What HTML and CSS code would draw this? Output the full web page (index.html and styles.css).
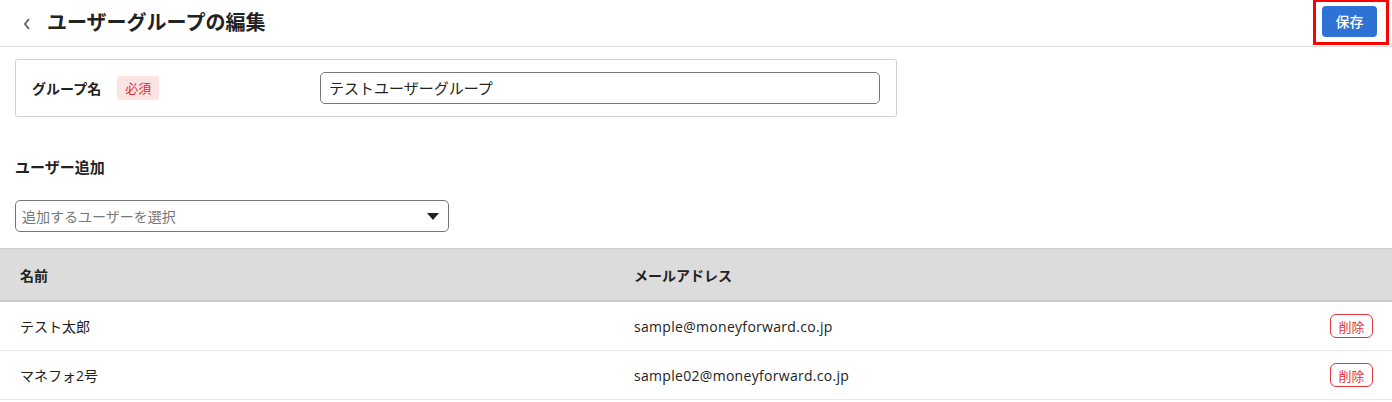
FILE: index.html
```html
<!DOCTYPE html>
<html lang="ja">
<head>
<meta charset="utf-8">
<link rel="stylesheet" href="styles.css">
</head>
<body>
<header class="topbar">
  <div class="title-wrap">
    <svg class="back" width="10" height="14" viewBox="0 0 10 14"><path d="M7 2 L3 7 L7 12" fill="none" stroke="#666" stroke-width="2"/></svg>
    <h1 class="title">ユーザーグループの編集</h1>
  </div>
  <div class="save-wrap">
    <button class="save">保存</button>
    <span class="highlight"></span>
  </div>
</header>
<main class="content">
  <section class="card">
    <div class="label-group">
      <span class="label">グループ名</span>
      <span class="badge">必須</span>
    </div>
    <div class="input">テストユーザーグループ</div>
  </section>
  <h2 class="section-title">ユーザー追加</h2>
  <div class="select">
    <span class="placeholder">追加するユーザーを選択</span>
    <svg width="12" height="7" viewBox="0 0 12 7"><path d="M0 0 H12 L6 7 Z" fill="#222"/></svg>
  </div>
</main>
<div class="table">
  <div class="row head">
    <div class="cell">名前</div>
    <div class="cell">メールアドレス</div>
    <div class="cell"></div>
  </div>
  <div class="row">
    <div class="cell">テスト太郎</div>
    <div class="cell email">sample@moneyforward.co.jp</div>
    <div class="cell act"><button class="del">削除</button></div>
  </div>
  <div class="row">
    <div class="cell">マネフォ2号</div>
    <div class="cell email">sample02@moneyforward.co.jp</div>
    <div class="cell act"><button class="del">削除</button></div>
  </div>
</div>
</body>
</html>
```
FILE: styles.css
```css
* { box-sizing: border-box; }
body {
  margin: 0;
  font-family: "Open Sans", "Noto Sans CJK JP", sans-serif;
  color: #222;
  background: #fff;
  font-size: 14px;
}
.topbar {
  height: 47px;
  border-bottom: 1px solid #dcdcdc;
  display: flex;
  align-items: center;
  justify-content: space-between;
  padding: 0 15px 0 22px;
}
.title-wrap { display: flex; align-items: center; gap: 15px; }
.back { margin-top: 1px; }
.title {
  margin: 0;
  font-size: 20px;
  font-weight: 700;
  line-height: 1;
  letter-spacing: 0;
}
.save-wrap { position: relative; margin-bottom: 4px; }
.save {
  width: 55px;
  height: 31px;
  border: none;
  border-radius: 4px;
  background: #2f72d6;
  color: #fff;
  font-family: inherit;
  font-size: 14px;
  font-weight: 500;
  padding: 0;
}
.highlight {
  position: absolute;
  left: -9px;
  right: -12px;
  top: -7px;
  bottom: -8px;
  border: 3px solid #f00;
  pointer-events: none;
}
.content { padding: 12px 15px 0; }
.card {
  width: 882px;
  height: 58px;
  border: 1px solid #cfcfcf;
  border-radius: 3px;
  display: flex;
  align-items: center;
  padding: 0 16px;
}
.label-group { width: 288px; display: flex; align-items: center; gap: 16px; }
.label { font-weight: 700; font-size: 14px; }
.badge {
  background: #fde4e4;
  color: #d9302f;
  font-size: 13px;
  border-radius: 3px;
  height: 24px;
  line-height: 24px;
  padding: 0 8px;
}
.input {
  width: 560px;
  height: 32px;
  border: 1px solid #777;
  border-radius: 5px;
  padding: 0 8px;
  line-height: 30px;
  font-size: 15px;
}
.section-title {
  margin: 38px 0 21px;
  font-size: 15px;
  font-weight: 700;
  line-height: 24px;
}
.select {
  width: 434px;
  height: 32px;
  border: 1px solid #777;
  border-radius: 5px;
  display: flex;
  align-items: center;
  justify-content: space-between;
  padding: 0 9px 0 6px;
}
.placeholder { color: #777; font-size: 14px; }
.table { margin-top: 16px; }
.row {
  display: grid;
  grid-template-columns: 614px 1fr 100px;
  height: 49px;
  align-items: center;
  border-bottom: 1px solid #e6e6e6;
}
.row.head {
  height: 54px;
  background: #dcdcdc;
  border-top: 1px solid #cfcfcf;
  border-bottom: 2px solid #cccccc;
  font-weight: 700;
}
.cell { padding-left: 20px; font-size: 14px; }
.email { letter-spacing: 0.3px; }
.act { display: flex; justify-content: flex-end; padding-right: 19px; }
.del {
  background: #fff;
  border: 1px solid #e0353a;
  color: #e0353a;
  border-radius: 6px;
  font-family: inherit;
  font-size: 13px;
  height: 24px;
  width: 43px;
  padding: 0;
}
```
